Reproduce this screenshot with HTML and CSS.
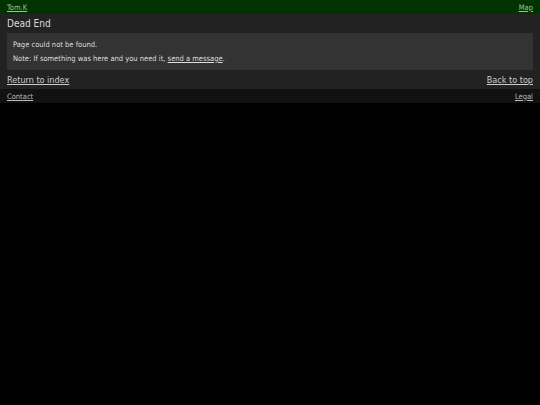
FILE: index.html
```html
<!DOCTYPE html>
<html>
<head>
<meta charset="utf-8">
<link rel="stylesheet" href="styles.css">
</head>
<body>
<header class="top">
  <a href="#" class="lnk">Tom.K</a>
  <a href="#" class="lnk">Map</a>
</header>
<main class="main">
  <h1 class="title">Dead End</h1>
  <div class="box">
    <p class="msg">Page could not be found.</p>
    <p class="msg">Note: If something was here and you need it, <a href="#" class="lnk">send a message</a>.</p>
  </div>
  <nav class="navrow">
    <a href="#" class="lnk">Return to index</a>
    <a href="#" class="lnk">Back to top</a>
  </nav>
</main>
<footer class="foot">
  <a href="#" class="lnk">Contact</a>
  <a href="#" class="lnk">Legal</a>
</footer>
</body>
</html>
```
FILE: styles.css
```css
html, body {
  margin: 0;
  padding: 0;
  background: #000;
  font-family: "DejaVu Sans Condensed", "DejaVu Sans", sans-serif;
  font-stretch: condensed;
  color: #ddd;
}
.lnk {
  color: inherit;
  text-decoration: underline;
}
.top {
  display: flex;
  justify-content: space-between;
  align-items: center;
  height: 14px;
  padding: 0 7px;
  background: #013300;
  color: #99c499;
  font-size: 7.5px;
}
.main {
  background: #222;
  padding: 1px 0 0;
}
.title {
  margin: 0;
  padding: 0 7px;
  font-size: 10px;
  font-weight: normal;
  line-height: 18px;
  color: #ddd;
}
.box {
  margin: 0 7px;
  background: #333;
  padding: 5px 6px;
}
.msg {
  margin: 0;
  font-size: 7.5px;
  line-height: 13.5px;
  color: #ddd;
}
.navrow {
  display: flex;
  justify-content: space-between;
  padding: 0 7px;
  height: 19px;
  align-items: center;
  font-size: 9px;
  color: #ccc;
}
.foot {
  display: flex;
  justify-content: space-between;
  align-items: center;
  height: 14px;
  padding: 0 7px;
  background: #111;
  color: #bbb;
  font-size: 7.5px;
}
```
